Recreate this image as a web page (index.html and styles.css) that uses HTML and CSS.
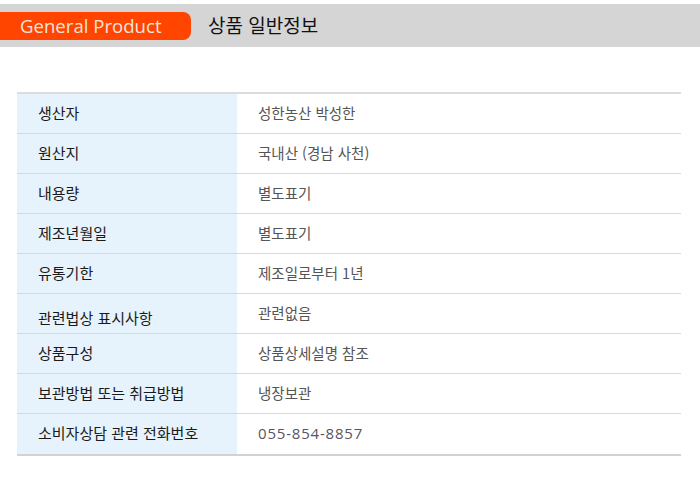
FILE: index.html
```html
<!DOCTYPE html>
<html lang="ko">
<head>
<meta charset="utf-8">
<link rel="stylesheet" href="styles.css">
</head>
<body>
<div class="head">
  <div class="pill">General Product</div>
  <div class="title">상품 일반정보</div>
</div>
<div class="info">
  <div class="row"><div class="lbl">생산자</div><div class="val">성한농산 박성한</div></div>
  <div class="row"><div class="lbl">원산지</div><div class="val">국내산 (경남 사천)</div></div>
  <div class="row"><div class="lbl">내용량</div><div class="val">별도표기</div></div>
  <div class="row"><div class="lbl">제조년월일</div><div class="val">별도표기</div></div>
  <div class="row"><div class="lbl">유통기한</div><div class="val">제조일로부터 1년</div></div>
  <div class="row"><div class="lbl lower">관련법상 표시사항</div><div class="val">관련없음</div></div>
  <div class="row"><div class="lbl">상품구성</div><div class="val">상품상세설명 참조</div></div>
  <div class="row"><div class="lbl">보관방법 또는 취급방법</div><div class="val">냉장보관</div></div>
  <div class="row last"><div class="lbl">소비자상담 관련 전화번호</div><div class="val phone">055-854-8857</div></div>
</div>
</body>
</html>
```

FILE: styles.css
```css
html, body {
  margin: 0;
  padding: 0;
  background: #ffffff;
}
body {
  font-family: "Noto Sans CJK KR", "Noto Sans", sans-serif;
}
.head {
  margin-top: 4px;
  height: 43px;
  background: #d5d5d5;
  display: flex;
  align-items: center;
}
.pill {
  width: 171px;
  height: 28px;
  padding-left: 20px;
  background: #ff4500;
  border-radius: 0 8px 8px 0;
  color: #f2e4dc;
  font-family: "Open Sans", "Noto Sans", sans-serif;
  font-size: 18.6px;
  line-height: 27px;
}
.title {
  margin-left: 17px;
  font-size: 19px;
  color: #111111;
  line-height: 28px;
  padding-bottom: 2px;
}
.info {
  margin: 45px 19px 0 17px;
  border-top: 2px solid #dcdcdc;
  border-bottom: 1px solid #d2d2d2;
}
.row {
  display: grid;
  grid-template-columns: 220px 1fr;
  height: 39px;
  border-bottom: 1px solid #d9d9d9;
}
.row.last {
  height: 40px;
  border-bottom: 1px solid #d2d2d2;
}
.lbl {
  background: #e6f2fc;
  padding-left: 21px;
  padding-bottom: 3px;
  font-size: 15px;
  color: #1a1a1a;
  display: flex;
  align-items: center;
}
.lbl.lower {
  padding-top: 7px;
  padding-bottom: 0;
}
.val {
  padding-left: 21px;
  padding-bottom: 3px;
  font-size: 14.5px;
  color: #555555;
  display: flex;
  align-items: center;
}
.val.phone {
  font-family: "Open Sans", "Noto Sans", sans-serif;
  font-size: 15px;
  letter-spacing: 0.8px;
  color: #5a5560;
}
```
